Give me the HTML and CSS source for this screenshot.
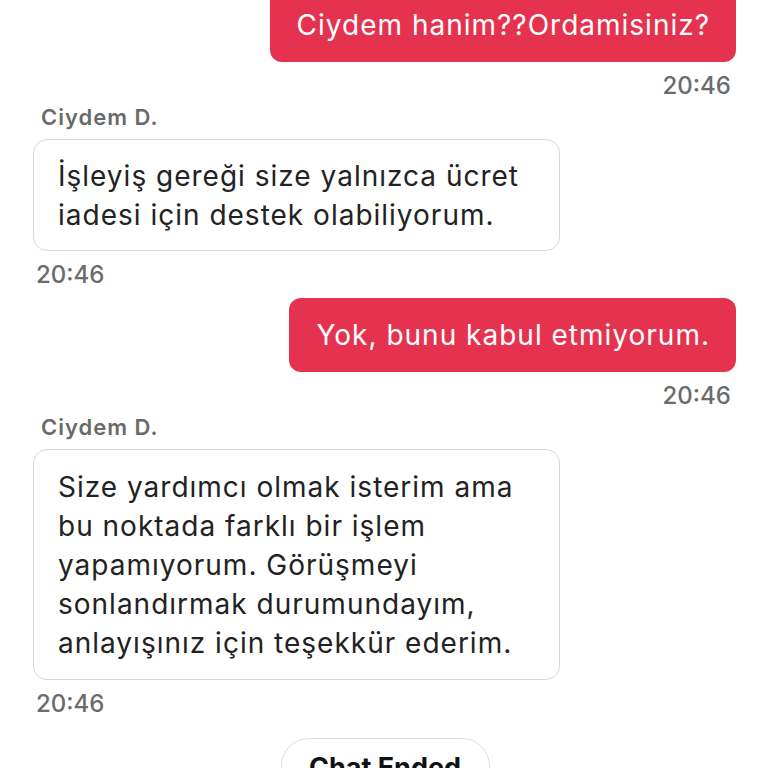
FILE: index.html
```html
<!DOCTYPE html>
<html lang="tr">
<head>
<meta charset="utf-8">
<link rel="stylesheet" href="styles.css">
</head>
<body>
<div class="chat">
  <div class="msg out">
    <div class="bubble red">Ciydem hanim??Ordamisiniz?</div>
    <div class="time">20:46</div>
  </div>
  <div class="msg in">
    <div class="name">Ciydem D.</div>
    <div class="bubble white">İşleyiş gereği size yalnızca ücret iadesi için destek olabiliyorum.</div>
    <div class="time">20:46</div>
  </div>
  <div class="msg out">
    <div class="bubble red">Yok, bunu kabul etmiyorum.</div>
    <div class="time">20:46</div>
  </div>
  <div class="msg in">
    <div class="name">Ciydem D.</div>
    <div class="bubble white long">Size yardımcı olmak isterim ama bu noktada farklı bir işlem yapamıyorum. Görüşmeyi sonlandırmak durumundayım, anlayışınız için teşekkür ederim.</div>
    <div class="time">20:46</div>
  </div>
  <div class="ended-wrap">
    <div class="ended">Chat Ended</div>
  </div>
</div>
</body>
</html>
```

FILE: styles.css
```css
html, body {
  margin: 0;
  padding: 0;
  background: #ffffff;
  overflow: hidden;
}
body {
  font-family: "Inter", "Roboto", "Liberation Sans", sans-serif;
  width: 768px;
  height: 768px;
}
.chat {
  display: flex;
  flex-direction: column;
  padding: 0 32px 0 33px;
  margin-top: -12px;
}
.msg {
  display: flex;
  flex-direction: column;
}
.msg.out {
  align-items: flex-end;
}
.msg.in {
  align-items: flex-start;
}
.msg.out + .msg.in {
  margin-top: 7px;
}
.msg.in + .msg.out {
  margin-top: 11px;
}
.bubble {
  font-size: 28px;
  line-height: 39px;
  letter-spacing: 1px;
  box-sizing: border-box;
}
.red {
  background: #e5334f;
  color: #ffffff;
  border-radius: 12px;
  padding: 18px 26px 17px 27px;
}
.white {
  background: #ffffff;
  color: #222222;
  border: 1px solid #d9d9d9;
  border-radius: 14px;
  width: 527px;
  padding: 17px 22px 15px 24px;
}
.white.long {
  padding-top: 18px;
  padding-bottom: 16px;
}
.time {
  font-size: 24px;
  line-height: 24px;
  color: #6b6b6b;
  font-weight: 500;
  margin-top: 12px;
}
.msg.out .time {
  margin-right: 5px;
}
.msg.in .time {
  margin-left: 3px;
}
.name {
  font-size: 22px;
  line-height: 24px;
  color: #6a6a6a;
  font-weight: 600;
  letter-spacing: 1px;
  margin-left: 8px;
  margin-bottom: 10px;
}
.ended-wrap {
  display: flex;
  justify-content: center;
  margin-top: 22px;
}
.ended {
  border: 1.5px solid #dcdcdc;
  border-radius: 28px;
  padding: 12px 20px;
  font-size: 27px;
  font-weight: 700;
  color: #111111;
  width: 209px;
  box-sizing: border-box;
  text-align: center;
  margin-left: 1px;
}
```
